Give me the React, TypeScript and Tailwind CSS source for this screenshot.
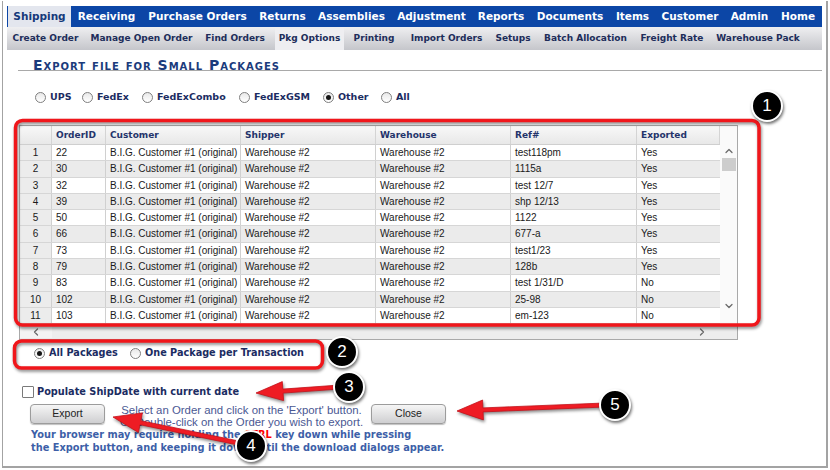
import { ChevronDown, ChevronLeft, ChevronRight, ChevronUp } from "lucide-react";

const topNav: [string, number][] = [
  ["Shipping", 63],
  ["Receiving", 71],
  ["Purchase Orders", 111],
  ["Returns", 59],
  ["Assemblies", 79],
  ["Adjustment", 81],
  ["Reports", 58],
  ["Documents", 80],
  ["Items", 45],
  ["Customer", 70],
  ["Admin", 49],
  ["Home", 48],
];

const subNav: [string, number][] = [
  ["Create Order", 77],
  ["Manage Open Order", 115],
  ["Find Orders", 72],
  ["Pkg Options", 69],
  ["Printing", 60],
  ["Import Orders", 85],
  ["Setups", 48],
  ["Batch Allocation", 97],
  ["Freight Rate", 76],
  ["Warehouse Pack", 96],
];

const carriers: [string, number, boolean][] = [
  ["UPS", 47, false],
  ["FedEx", 60, false],
  ["FedExCombo", 97, false],
  ["FedExGSM", 84, false],
  ["Other", 58, true],
  ["All", 40, false],
];

const columns: [string, number][] = [
  ["OrderID", 54],
  ["Customer", 135],
  ["Shipper", 135],
  ["Warehouse", 135],
  ["Ref#", 126],
  ["Exported", 83],
];

const orders = [
  ["22", "test118pm", "Yes"],
  ["30", "1115a", "Yes"],
  ["32", "test 12/7", "Yes"],
  ["39", "shp 12/13", "Yes"],
  ["50", "1122", "Yes"],
  ["66", "677-a", "Yes"],
  ["73", "test1/23", "Yes"],
  ["79", "128b", "Yes"],
  ["83", "test 1/31/D", "No"],
  ["102", "25-98", "No"],
  ["103", "em-123", "No"],
];

const badges: [string, number, number][] = [
  ["1", 767, 106],
  ["2", 342, 352],
  ["3", 349, 387],
  ["4", 251, 446],
  ["5", 615, 405],
];

// arrow polygon from tail to tip
function arrowPoints(x1: number, y1: number, x2: number, y2: number, head = 27, half = 9.5, shaft = 2) {
  const len = Math.hypot(x2 - x1, y2 - y1);
  const ux = (x2 - x1) / len;
  const uy = (y2 - y1) / len;
  const nx = -uy;
  const ny = ux;
  const bx = x2 - ux * head;
  const by = y2 - uy * head;
  const pts = [
    [x1 + nx * shaft, y1 + ny * shaft],
    [bx + nx * shaft, by + ny * shaft],
    [bx + nx * half, by + ny * half],
    [x2, y2],
    [bx - nx * half, by - ny * half],
    [bx - nx * shaft, by - ny * shaft],
    [x1 - nx * shaft, y1 - ny * shaft],
  ];
  return pts.map(([x, y]) => `${x.toFixed(1)},${y.toFixed(1)}`).join(" ");
}

function Radio({ checked = false }: { checked?: boolean }) {
  return (
    <span className="flex h-[11px] w-[11px] shrink-0 items-center justify-center rounded-full border border-[#7f7f7f] bg-linear-to-b from-[#e9e9e9] to-white">
      {checked ? <span className="h-[5px] w-[5px] rounded-full bg-[#151515]" /> : null}
    </span>
  );
}

function GrayButton({ label }: { label: string }) {
  return (
    <button className="block h-[20px] w-[75px] shrink-0 rounded-[4px] border border-[#9c9c9c] bg-linear-to-b from-[#f6f6f6] to-[#cfcfd1] font-['Liberation_Sans',sans-serif] text-[10.5px] text-[#222] shadow-[0_1px_1px_rgba(0,0,0,0.25)]">
      {label}
    </button>
  );
}

export default function App() {
  return (
    <div className="relative h-[470px] w-[830px] overflow-hidden bg-white">
      <div className="ml-[2px] mt-[1px] h-[467px] w-[826px] border-r-2 border-b-2 border-l border-[#a3a3a3] pt-[5px] pr-[4px] pl-[4px]">
        {/* top nav */}
        <nav className="flex h-[21px] bg-[#0c46a6] pl-[1px] font-['DejaVu_Sans',sans-serif] text-[10.5px] font-bold leading-[21px]">
          {topNav.map(([label, w], i) => (
            <div
              key={label}
              style={{ width: w }}
              className={i === 0 ? "bg-[#e3e6ee] text-center text-[#15397a]" : "text-center text-white"}
            >
              {label}
            </div>
          ))}
        </nav>

        {/* sub nav */}
        <nav className="flex h-[23px] bg-linear-to-b from-[#efeff1] to-[#c5c6cb] font-['DejaVu_Sans',sans-serif] text-[9px] font-bold leading-[23px] text-[#202d5a]">
          {subNav.map(([label, w]) => (
            <div
              key={label}
              style={{ width: w }}
              className={label === "Pkg Options" ? "ml-[4px] bg-[#eeeef1] text-center" : "text-center"}
            >
              {label}
            </div>
          ))}
        </nav>

        {/* title */}
        <div className="ml-[11px] h-[21px] border-b border-[#a9a9a9] pt-[2px] pl-[15px]">
          <span className="font-['DejaVu_Sans',sans-serif] text-[14px] font-bold leading-[14px] tracking-[1px] text-[#1b3b7c] [font-variant-caps:small-caps]">
            Export file for Small Packages
          </span>
        </div>

        {/* carrier radios */}
        <div className="mt-[19px] ml-[28px] flex h-[14px] items-center font-['DejaVu_Sans',sans-serif] text-[9.5px] font-bold text-[#1b2c62]">
          {carriers.map(([label, w, checked]) => (
            <div key={label} style={{ width: w }} className="flex items-center gap-[4px]">
              <Radio checked={checked} />
              <span>{label}</span>
            </div>
          ))}
        </div>

        {/* grid */}
        <div className="mt-[21px] ml-[12px] flex h-[215px] w-[719px] flex-col border border-[#a9a9a9] font-['Liberation_Sans',sans-serif] text-[10px] text-[#1a1a1a]">
          <div className="flex min-h-0 flex-1">
            <div className="w-[700px]">
              <div className="flex h-[19px] border-b border-[#cfcfcf] bg-linear-to-b from-[#f8f8f8] to-[#e8e8e8] font-['DejaVu_Sans',sans-serif] text-[9px] font-bold leading-[18px] text-[#24346b]">
                <div className="w-[32px] border-r border-[#d4d4d4]" />
                {columns.map(([label, w]) => (
                  <div key={label} style={{ width: w }} className="border-r border-[#d4d4d4] pl-[4px]">
                    {label}
                  </div>
                ))}
              </div>
              {orders.map(([id, ref, exported], i) => (
                <div
                  key={id}
                  className={`flex h-[16.3px] border-b border-[#d6d6d6] leading-[15px] ${i % 2 ? "bg-[#ebebeb]" : "bg-white"}`}
                >
                  <div className="w-[32px] border-r border-[#d0d0d0] bg-[#ececec] text-center">{i + 1}</div>
                  <div className="w-[54px] border-r border-[#d0d0d0] pl-[4px]">{id}</div>
                  <div className="w-[135px] border-r border-[#d0d0d0] pl-[4px]">B.I.G. Customer #1 (original)</div>
                  <div className="w-[135px] border-r border-[#d0d0d0] pl-[4px]">Warehouse #2</div>
                  <div className="w-[135px] border-r border-[#d0d0d0] pl-[4px]">Warehouse #2</div>
                  <div className="w-[126px] border-r border-[#d0d0d0] pl-[4px]">{ref}</div>
                  <div className="w-[83px] pl-[4px]">{exported}</div>
                </div>
              ))}
            </div>
            {/* vertical scrollbar */}
            <div className="flex w-[17px] flex-col items-center bg-[#fafafa]">
              <div className="h-[19px]" />
              <ChevronUp size={12} strokeWidth={2.5} className="text-[#6a6a6a]" />
              <div className="mt-[1px] h-[13px] w-[14px] bg-[#cdcdcd]" />
              <div className="flex-1" />
              <ChevronDown size={12} strokeWidth={2.5} className="mb-[12px] text-[#6a6a6a]" />
            </div>
          </div>
          {/* horizontal scrollbar */}
          <div className="flex h-[15px] items-center bg-[#ededed]">
            <div className="flex w-[32px] justify-center bg-[#f3f3f3]">
              <ChevronLeft size={12} strokeWidth={2.5} className="text-[#6a6a6a]" />
            </div>
            <div className="flex-1" />
            <ChevronRight size={12} strokeWidth={2.5} className="mr-[29px] text-[#6a6a6a]" />
          </div>
        </div>

        {/* package radios */}
        <div className="mt-[6px] ml-[27px] flex h-[14px] items-center font-['DejaVu_Sans',sans-serif] text-[9.7px] font-bold text-[#1b2c62]">
          <div className="flex w-[96px] items-center gap-[4px]">
            <Radio checked />
            <span>All Packages</span>
          </div>
          <div className="flex items-center gap-[4px]">
            <Radio />
            <span>One Package per Transaction</span>
          </div>
        </div>

        {/* checkbox */}
        <div className="mt-[26px] ml-[15px] flex h-[12px] items-center gap-[3px] font-['DejaVu_Sans',sans-serif] text-[9.75px] font-bold text-[#1b2c62]">
          <span className="h-[12px] w-[12px] rounded-[1px] border border-[#7a7a7a] bg-white" />
          <span>Populate ShipDate with current date</span>
        </div>

        {/* actions */}
        <div className="mt-[6px] ml-[23px] flex items-start">
          <GrayButton label="Export" />
          <div className="ml-[12px] w-[249px] text-center font-['Liberation_Sans',sans-serif] text-[11.4px] leading-[12px] text-[#4a5893]">
            Select an Order and click on the 'Export' button.
            <br />
            Or Double-click on the Order you wish to export.
          </div>
          <div className="ml-[5px] flex">
            <GrayButton label="Close" />
          </div>
        </div>

        <p className="mt-[0px] ml-[24px] font-['DejaVu_Sans',sans-serif] text-[9.8px] font-bold leading-[13px] text-[#3d5fa8]">
          Your browser may require holding the <span className="text-[#ff0000]">CTRL</span> key down while pressing
          <br />
          the Export button, and keeping it down until the download dialogs appear.
        </p>
      </div>

      {/* annotations */}
      <svg className="pointer-events-none absolute top-0 left-0" width="830" height="470">
        <g className="drop-shadow-[1px_2px_1.5px_rgba(0,0,0,0.45)]" fill="none" stroke="#f0161b" strokeWidth="3.5">
          <rect x="15.5" y="120.5" width="743.5" height="204.5" rx="7" />
          <rect x="14.5" y="341" width="308" height="27" rx="7" />
        </g>
        <g className="drop-shadow-[1px_2px_1.5px_rgba(0,0,0,0.45)]" fill="#ee1c24" stroke="#c4121a" strokeWidth="0.8">
          <polygon points={arrowPoints(340, 387, 256, 393)} />
          <polygon points={arrowPoints(605, 405, 457, 411, 26, 10)} />
          <polygon points={arrowPoints(243, 444, 113, 417, 28, 10)} />
        </g>
      </svg>
      {badges.map(([n, cx, cy]) => (
        <div
          key={n}
          style={{ left: cx - 16, top: cy - 16 }}
          className="absolute flex h-[32px] w-[32px] items-center justify-center rounded-full border-2 border-white bg-black font-['Liberation_Sans',sans-serif] text-[17px] text-white shadow-[1px_2px_3px_rgba(0,0,0,0.55)]"
        >
          {n}
        </div>
      ))}
    </div>
  );
}
